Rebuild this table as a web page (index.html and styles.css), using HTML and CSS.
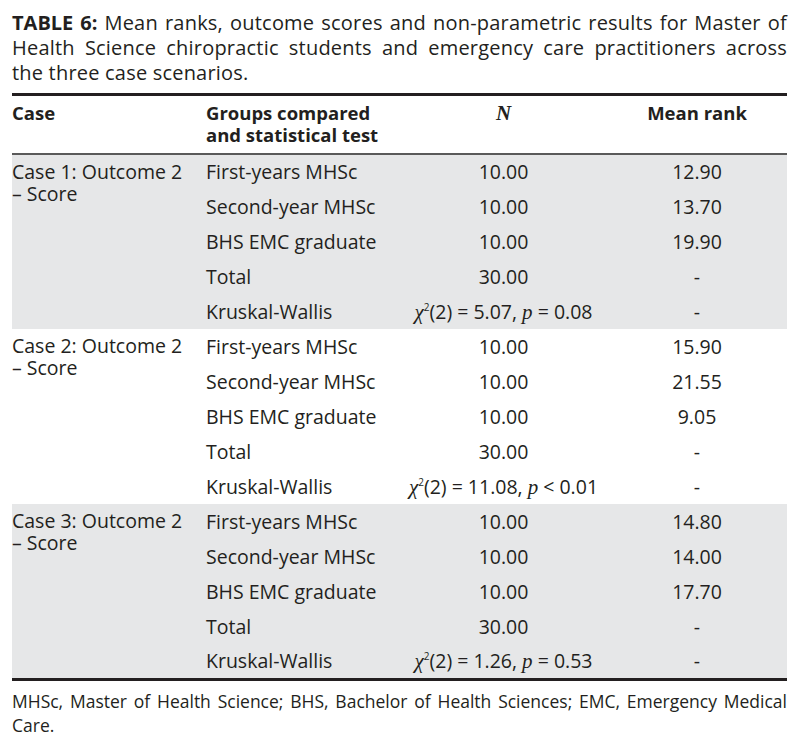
FILE: index.html
```html
<!DOCTYPE html>
<html lang="en">
<head>
<meta charset="utf-8">
<title>Table 6</title>
<link rel="stylesheet" href="styles.css">
</head>
<body>
<div class="page">
  <p class="caption"><b>TABLE 6:</b> Mean ranks, outcome scores and non-parametric results for Master of Health Science chiropractic students and emergency care practitioners across <span class="nobr">the three</span> case scenarios.</p>
  <table class="data">
    <colgroup>
      <col class="c1"><col class="c2"><col class="c3"><col class="c4">
    </colgroup>
    <thead>
      <tr>
        <th class="case">Case</th>
        <th>Groups compared<br>and statistical test</th>
        <th class="ctr"><span class="serif-bi">N</span></th>
        <th class="ctr">Mean rank</th>
      </tr>
    </thead>
    <tbody class="shade">
      <tr><td class="case" rowspan="5">Case 1: Outcome 2<br>– Score</td><td>First-years MHSc</td><td class="ctr">10.00</td><td class="ctr">12.90</td></tr>
      <tr><td>Second-year MHSc</td><td class="ctr">10.00</td><td class="ctr">13.70</td></tr>
      <tr><td>BHS EMC graduate</td><td class="ctr">10.00</td><td class="ctr">19.90</td></tr>
      <tr><td>Total</td><td class="ctr">30.00</td><td class="ctr">-</td></tr>
      <tr><td>Kruskal-Wallis</td><td class="ctr"><i class="serif-i">χ</i><sup>2</sup>(2) = 5.07, <i class="serif-i">p</i> = 0.08</td><td class="ctr">-</td></tr>
    </tbody>
    <tbody>
      <tr><td class="case" rowspan="5">Case 2: Outcome 2<br>– Score</td><td>First-years MHSc</td><td class="ctr">10.00</td><td class="ctr">15.90</td></tr>
      <tr><td>Second-year MHSc</td><td class="ctr">10.00</td><td class="ctr">21.55</td></tr>
      <tr><td>BHS EMC graduate</td><td class="ctr">10.00</td><td class="ctr">9.05</td></tr>
      <tr><td>Total</td><td class="ctr">30.00</td><td class="ctr">-</td></tr>
      <tr><td>Kruskal-Wallis</td><td class="ctr"><i class="serif-i">χ</i><sup>2</sup>(2) = 11.08, <i class="serif-i">p</i> &lt; 0.01</td><td class="ctr">-</td></tr>
    </tbody>
    <tbody class="shade last">
      <tr><td class="case" rowspan="5">Case 3: Outcome 2<br>– Score</td><td>First-years MHSc</td><td class="ctr">10.00</td><td class="ctr">14.80</td></tr>
      <tr><td>Second-year MHSc</td><td class="ctr">10.00</td><td class="ctr">14.00</td></tr>
      <tr><td>BHS EMC graduate</td><td class="ctr">10.00</td><td class="ctr">17.70</td></tr>
      <tr><td>Total</td><td class="ctr">30.00</td><td class="ctr">-</td></tr>
      <tr><td>Kruskal-Wallis</td><td class="ctr"><i class="serif-i">χ</i><sup>2</sup>(2) = 1.26, <i class="serif-i">p</i> = 0.53</td><td class="ctr">-</td></tr>
    </tbody>
  </table>
  <p class="note">MHSc, Master of Health Science; BHS, Bachelor of Health Sciences; EMC, Emergency Medical Care.</p>
</div>
</body>
</html>
```
FILE: styles.css
```css
html, body {
  margin: 0;
  padding: 0;
  background: #ffffff;
}

.page {
  padding: 10px 13px 0 12px;
  font-family: "Open Sans", "DejaVu Sans", sans-serif;
  color: #231f20;
}

.caption {
  margin: 0;
  font-size: 20px;
  line-height: 25px;
  letter-spacing: 0.2px;
  text-align: justify;
}

.caption b {
  font-weight: 700;
  letter-spacing: 0;
}

.nobr {
  white-space: nowrap;
}

.data {
  width: 100%;
  margin-top: 8px;
  border-collapse: collapse;
  table-layout: fixed;
  font-size: 19.5px;
  border-top: 3px solid #231f20;
  border-bottom: 3px solid #231f20;
}

.c1 { width: 188px; }
.c2 { width: 200px; }
.c3 { width: 207px; }
.c4 { width: 180px; }

.data th {
  font-size: 18.5px;
  font-weight: 700;
  text-align: left;
  vertical-align: top;
  line-height: 22px;
  padding: 6px 6px 7px 6px;
  border-bottom: 2px solid #5a5a5a;
}

.data td {
  height: 35px;
  padding: 0 6px;
  line-height: 22px;
  vertical-align: middle;
  box-sizing: border-box;
}

.data th.case,
.data td.case {
  padding-left: 0;
}

.data td.case {
  vertical-align: top;
  padding-top: 6px;
}

.data .ctr {
  text-align: center;
}

.shade td {
  background: #e6e7e8;
}

.serif-bi {
  font-family: "Liberation Serif", "Times New Roman", serif;
  font-style: italic;
  font-weight: 700;
  font-size: 21px;
}

.serif-i {
  font-family: "Liberation Serif", "Times New Roman", serif;
  font-style: italic;
  font-size: 21px;
}

.data sup {
  font-size: 10px;
  vertical-align: 8px;
  line-height: 0;
}

.note {
  margin: 8px 0 0 0;
  font-size: 17.5px;
  line-height: 24px;
  text-align: justify;
}
```
